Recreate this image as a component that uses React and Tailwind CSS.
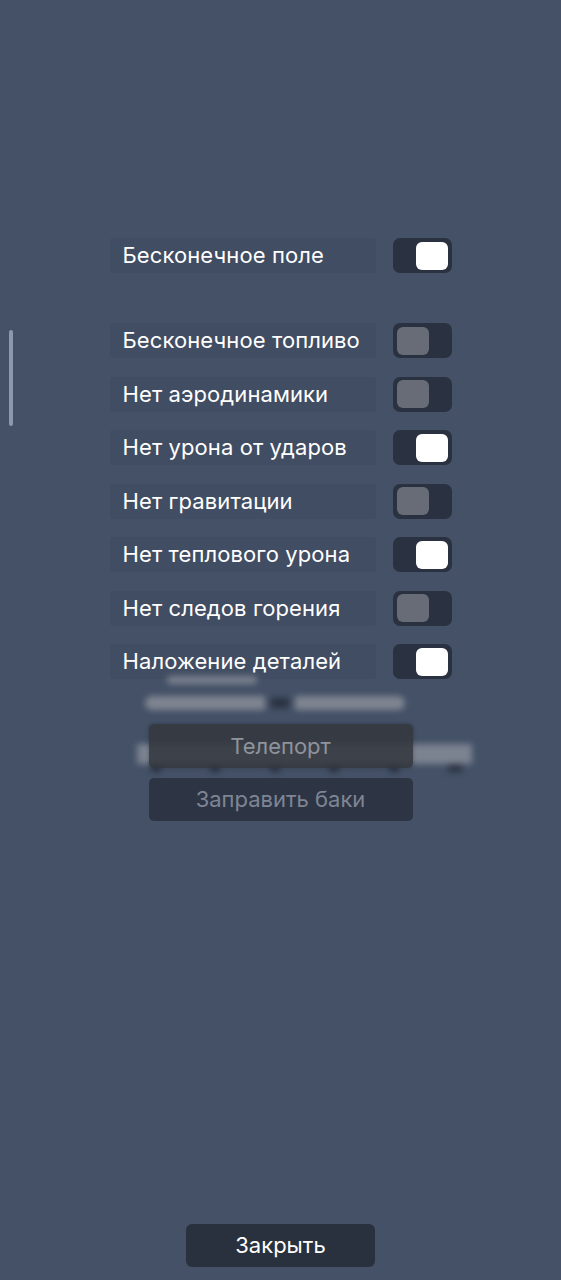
import { useState } from 'react';

const options = [
  { label: 'Бесконечное поле', on: true },
  { label: 'Бесконечное топливо', on: false },
  { label: 'Нет аэродинамики', on: false },
  { label: 'Нет урона от ударов', on: true },
  { label: 'Нет гравитации', on: false },
  { label: 'Нет теплового урона', on: true },
  { label: 'Нет следов горения', on: false },
  { label: 'Наложение деталей', on: true },
];

function Toggle({ on, onClick }) {
  return (
    <button
      onClick={onClick}
      className={`flex h-[35px] w-[59px] items-center rounded-[7px] bg-[#2a3241] px-[4px] ${on ? 'justify-end' : 'justify-start'}`}
    >
      <span className={`block h-[28px] w-[32px] rounded-[6px] ${on ? 'bg-white' : 'bg-[#676c77]'}`} />
    </button>
  );
}

function Row({ label, on, onToggle }) {
  return (
    <div className="flex h-[35px] items-center justify-between">
      <div className="flex h-[35px] w-[266px] items-center rounded-[3px] bg-[#414d62] pl-[13px] text-[22px] tracking-[0.1px] text-white">
        {label}
      </div>
      <Toggle on={on} onClick={onToggle} />
    </div>
  );
}

// blurred panel that sits behind the two action buttons
function BlurredBackdrop() {
  return (
    <div className="pointer-events-none absolute -left-[12px] -top-[48px] flex w-[340px] flex-col blur-[3px]">
      <div className="ml-[30px] h-[8px] w-[90px] rounded bg-[#8a8f99] opacity-80" />
      <div className="mt-[12px] flex items-center gap-[6px] pl-[8px]">
        <div className="h-[14px] w-[120px] rounded-l-full bg-[#7f8591]" />
        <div className="h-[10px] w-[18px] bg-[#2a3241]" />
        <div className="h-[14px] w-[110px] rounded-r-full bg-[#7f8591]" />
      </div>
      <div className="mt-[34px] h-[20px] w-[335px] bg-[#8a909b] opacity-80" />
      <div className="flex justify-between px-[14px]">
        <div className="h-[8px] w-[10px] bg-[#2a3241]" />
        <div className="h-[8px] w-[10px] bg-[#2a3241]" />
        <div className="h-[8px] w-[10px] bg-[#2a3241]" />
        <div className="h-[8px] w-[10px] bg-[#2a3241]" />
        <div className="h-[8px] w-[10px] bg-[#2a3241]" />
        <div className="h-[8px] w-[14px] bg-[#2a3241]" />
      </div>
    </div>
  );
}

export default function App() {
  const [state, setState] = useState(options.map(o => o.on));
  const flip = i => setState(s => s.map((v, j) => (j === i ? !v : v)));

  return (
    <div
      className="relative flex min-h-[1280px] w-full flex-col items-center bg-[#445167]"
      style={{ fontFamily: 'Inter, "Noto Sans", sans-serif' }}
    >
      {/* scrollbar */}
      <div className="absolute left-[9px] top-[330px] h-[96px] w-[4px] rounded-full bg-[#8b98ae]" />

      <div className="mt-[238px] flex w-[342px] flex-col">
        <Row label={options[0].label} on={state[0]} onToggle={() => flip(0)} />
        <div className="mt-[50px] flex flex-col gap-[18.5px]">
          {options.slice(1).map((o, i) => (
            <Row key={o.label} label={o.label} on={state[i + 1]} onToggle={() => flip(i + 1)} />
          ))}
        </div>
      </div>

      <div className="relative mt-[45px] flex w-[264px] flex-col gap-[10px]">
        <BlurredBackdrop />
        <button className="relative h-[44px] w-full rounded-[5px] bg-[#33363d]/85 text-[22px] text-[#8f939b] shadow-[0_0_4px_rgba(0,0,0,0.3)]">
          Телепорт
        </button>
        <button className="relative h-[43px] w-full rounded-[5px] bg-[#2d3545] text-[22px] text-[#7e8594]">
          Заправить баки
        </button>
      </div>

      <div className="flex-1" />
      <button className="mb-[13px] h-[43px] w-[189px] rounded-[6px] bg-[#2a313e] text-[22px] text-white">
        Закрыть
      </button>
    </div>
  );
}
